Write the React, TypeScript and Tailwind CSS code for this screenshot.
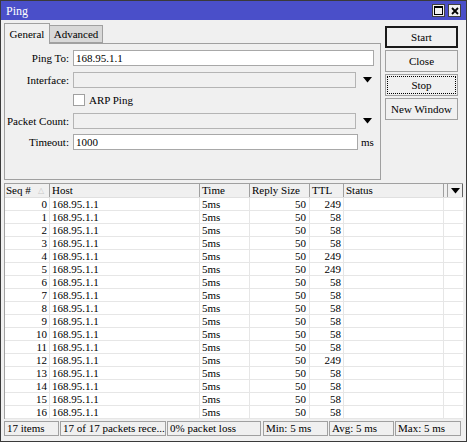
import React from "react";

const rows = [
  [0, 249], [1, 58], [2, 58], [3, 58], [4, 249], [5, 249], [6, 58], [7, 58], [8, 58],
  [9, 58], [10, 58], [11, 58], [12, 249], [13, 58], [14, 58], [15, 58], [16, 58],
];

function Arrow() {
  return (
    <svg width="9" height="6" viewBox="0 0 9 6" className="block">
      <path d="M0 0 H9 L4.5 5.5 Z" fill="#000" />
    </svg>
  );
}

function Label({ children }: { children: React.ReactNode }) {
  return <div className="w-[64px] shrink-0 text-right pr-0 mr-[4px] leading-[16px]">{children}</div>;
}

export default function App() {
  return (
    <div className="w-[467px] h-[442px] bg-[#f0f0f0] border border-[#3a3a3a] flex flex-col text-[11px] text-black overflow-hidden font-['Liberation_Serif','Times_New_Roman',serif]">
      {/* Title bar */}
      <div className="h-[19px] shrink-0 bg-[#4a4fc9] flex items-center pl-[5px] pr-[5px]">
        <span className="text-white text-[12px] leading-none">Ping</span>
        <div className="flex-1" />
        <div className="w-[13px] h-[13px] bg-[#f0f0f0] border border-[#404040] flex items-center justify-center mr-[3px]">
          <div className="w-[9px] h-[9px] border border-black border-t-2" />
        </div>
        <div className="w-[13px] h-[13px] bg-[#f0f0f0] border border-[#404040] flex items-center justify-center">
          <svg width="8" height="8" viewBox="0 0 8 8">
            <path d="M1 1 L7 7 M7 1 L1 7" stroke="#000" strokeWidth="1.8" />
          </svg>
        </div>
      </div>

      {/* Top section */}
      <div className="h-[163px] shrink-0 flex pl-[3px]">
        <div className="w-[377px] flex flex-col pt-[2px]">
          <div className="flex h-[21px] items-end">
            <div className="h-[21px] w-[46px] border border-b-0 border-[#a0a0a0] bg-[#f0f0f0] flex items-center justify-center relative z-10 -mb-px">
              General
            </div>
            <div className="h-[18px] w-[53px] border border-l-0 border-[#a0a0a0] bg-[#d8d8d8] flex items-center justify-center">
              Advanced
            </div>
          </div>
          <div className="h-[137px] border border-[#a0a0a0] pt-[6px] flex flex-col">
            <div className="flex items-center">
              <Label>Ping To:</Label>
              <div className="w-[301px] h-[16px] bg-white border border-[#a8a8a8] leading-[14px] pl-[2px]">168.95.1.1</div>
            </div>
            <div className="flex items-center mt-[6px]">
              <Label>Interface:</Label>
              <div className="w-[283px] h-[16px] bg-[#f0f0f0] border border-[#b4b4b4]" />
              <div className="ml-[7px]"><Arrow /></div>
            </div>
            <div className="flex items-center mt-[6px] pl-[68px]">
              <div className="w-[12px] h-[12px] bg-white border border-[#a0a0a0]" />
              <span className="ml-[4px] leading-[12px]">ARP Ping</span>
            </div>
            <div className="flex items-center mt-[7px]">
              <Label>Packet Count:</Label>
              <div className="w-[283px] h-[16px] bg-[#f0f0f0] border border-[#b4b4b4]" />
              <div className="ml-[7px]"><Arrow /></div>
            </div>
            <div className="flex items-center mt-[5px]">
              <Label>Timeout:</Label>
              <div className="w-[285px] h-[16px] bg-white border border-[#a8a8a8] leading-[14px] pl-[2px]">1000</div>
              <span className="ml-[3px]">ms</span>
            </div>
          </div>
        </div>
        <div className="flex flex-col gap-[2px] ml-[4px] pt-[6px]">
          <div className="w-[73px] h-[22px] border-2 border-[#1a1a1a] bg-[#f0f0f0] flex items-center justify-center">Start</div>
          <div className="w-[73px] h-[22px] border border-[#a0a0a0] bg-[#f0f0f0] flex items-center justify-center">Close</div>
          <div className="w-[73px] h-[22px] border border-[#a0a0a0] bg-[#f0f0f0] p-[1px]">
            <div className="w-full h-full border border-dotted border-black flex items-center justify-center">Stop</div>
          </div>
          <div className="w-[73px] h-[22px] border border-[#a0a0a0] bg-[#f0f0f0] flex items-center justify-center">New Window</div>
        </div>
      </div>

      {/* Table */}
      <div className="h-[236px] shrink-0 ml-[3px] mr-[3px] border-l border-t border-[#a0a0a0] bg-white flex flex-col">
        <div className="h-[14px] shrink-0 flex bg-[#f0f0f0] border-b border-[#e0e0e0]">
          <div className="w-[45px] border-r border-[#a0a0a0] pl-[1px] flex items-center leading-[13px]">
            <span>Seq #</span>
            <span className="ml-[7px] text-[#c8c8c8] text-[8px]">△</span>
          </div>
          <div className="w-[150px] border-r border-[#a0a0a0] pl-[2px] leading-[13px]">Host</div>
          <div className="w-[50px] border-r border-[#a0a0a0] pl-[2px] leading-[13px]">Time</div>
          <div className="w-[60px] border-r border-[#a0a0a0] pl-[2px] leading-[13px]">Reply Size</div>
          <div className="w-[34px] border-r border-[#a0a0a0] pl-[2px] leading-[13px]">TTL</div>
          <div className="w-[100px] border-r border-[#a0a0a0] pl-[2px] leading-[13px]">Status</div>
          <div className="w-[4px] border-r border-[#a0a0a0]" />
          <div className="w-[15px] border-r border-[#606060] flex items-center justify-center"><Arrow /></div>
        </div>
        {rows.map(([seq, ttl]) => (
          <div key={seq} className="h-[13px] shrink-0 flex border-b border-[#e6e6e6] leading-[12px]">
            <div className="w-[45px] border-r border-[#e6e6e6] text-right pr-[2px]">{seq}</div>
            <div className="w-[150px] border-r border-[#e6e6e6] pl-[2px]">168.95.1.1</div>
            <div className="w-[50px] border-r border-[#e6e6e6] pl-[2px]">5ms</div>
            <div className="w-[60px] border-r border-[#e6e6e6] text-right pr-[3px]">50</div>
            <div className="w-[34px] border-r border-[#e6e6e6] text-right pr-[2px]">{ttl}</div>
            <div className="w-[100px] border-r border-[#e6e6e6]" />
            <div className="flex-1" />
          </div>
        ))}
      </div>

      {/* Status bar */}
      <div className="h-[15px] shrink-0 mt-[2px] ml-[3px] mr-[5px] flex leading-[13px]">
        <div className="w-[55px] border border-[#a0a0a0] pl-[2px]">17 items</div>
        <div className="w-[106px] border border-[#a0a0a0] pl-[2px] ml-px">17 of 17 packets rece...</div>
        <div className="w-[94px] border border-[#a0a0a0] pl-[2px] ml-px">0% packet loss</div>
        <div className="w-[65px] border border-[#a0a0a0] pl-[2px] ml-[2px]">Min: 5 ms</div>
        <div className="w-[65px] border border-[#a0a0a0] pl-[2px] ml-px">Avg: 5 ms</div>
        <div className="flex-1 border border-[#a0a0a0] pl-[2px] ml-px">Max: 5 ms</div>
      </div>
    </div>
  );
}
